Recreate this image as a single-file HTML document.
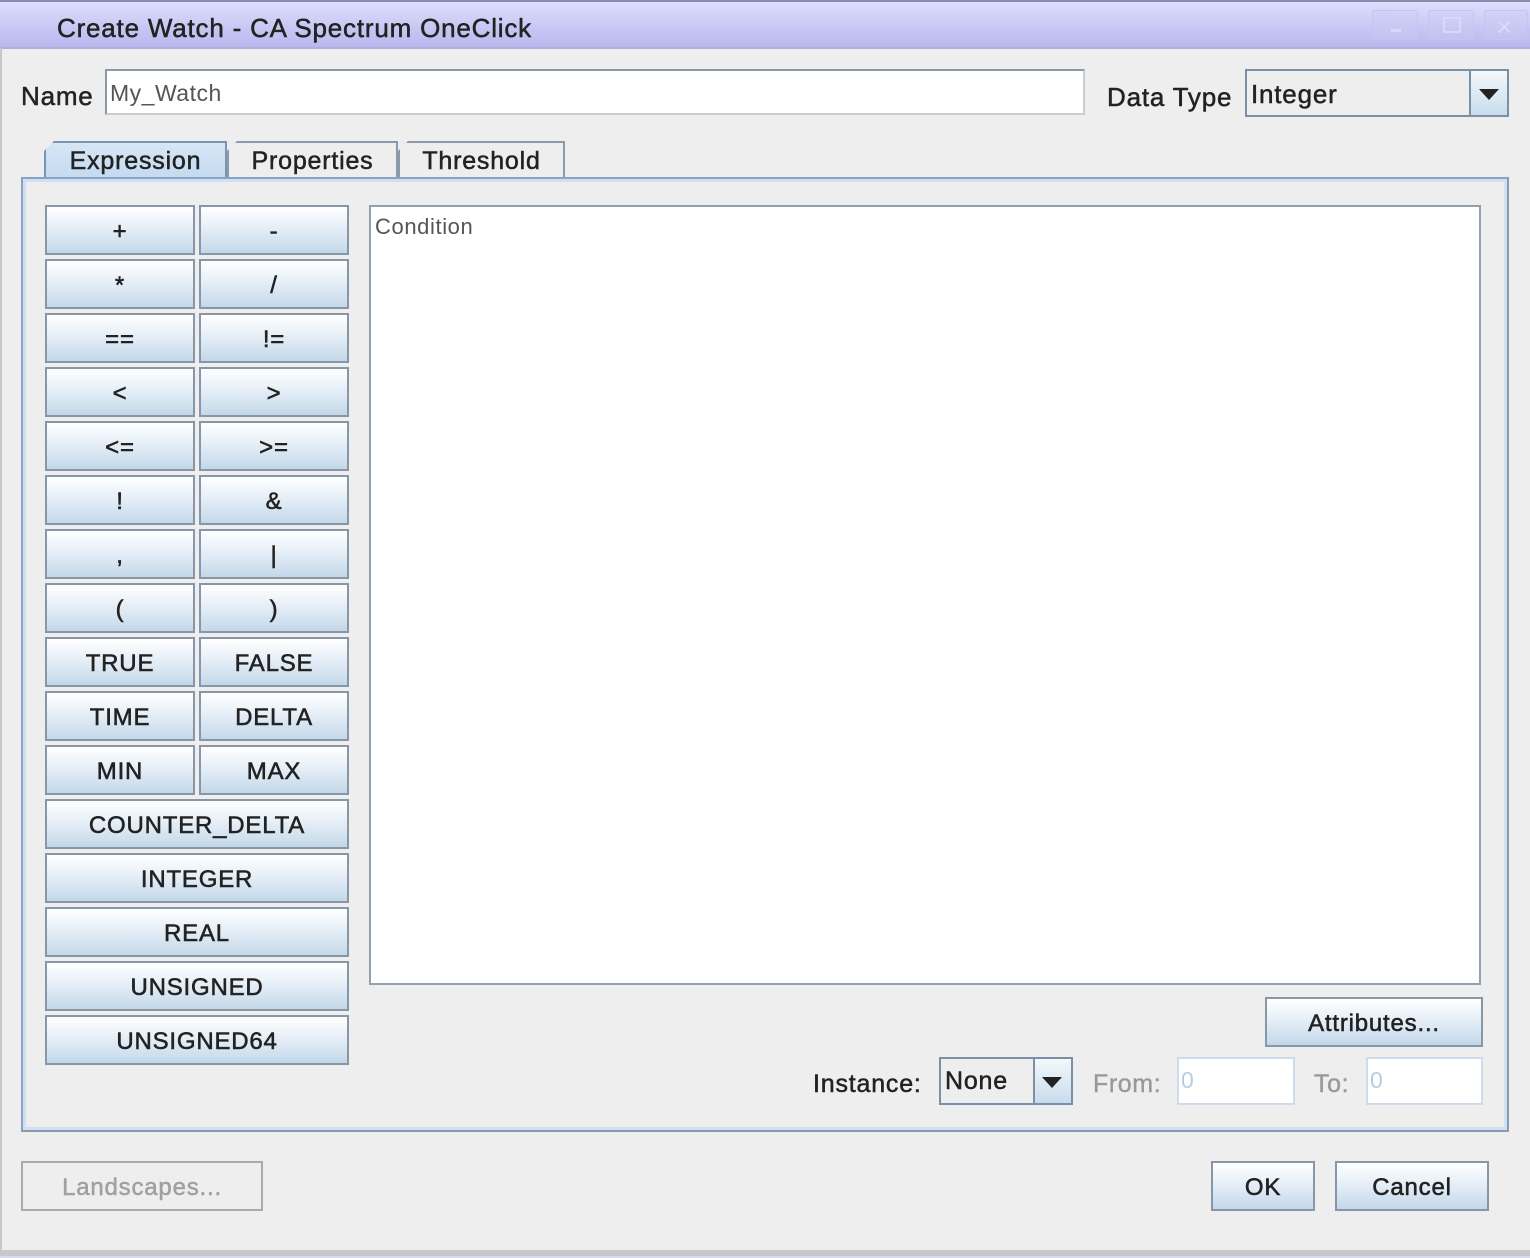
<!DOCTYPE html>
<html><head><meta charset="utf-8"><style>
*{box-sizing:border-box;margin:0;padding:0}
body{width:1530px;height:1258px;background:#eeeeee;font-family:"Liberation Sans",sans-serif;position:relative;overflow:hidden;color:#222}
.a{position:absolute}
.t{font-size:26px;letter-spacing:0.8px;-webkit-text-stroke:0.5px #222;white-space:nowrap}
.title{left:0;top:0;width:1530px;height:49px;background:linear-gradient(#dedefc,#c6c6f4 60%,#b8b8ee);border-top:2px solid #8a8ab0;border-bottom:2px solid #b0b0dc}
.wb{top:10px;width:46px;height:30px;border:1px solid #c4c4f0;border-radius:3px;background:linear-gradient(#d2d2f8,#c2c2f0)}
.btn{position:absolute;border:2px solid #8797a7;background:linear-gradient(#ffffff,#e6eff7 45%,#c4d8ea);display:flex;align-items:center;justify-content:center;padding-top:3px;font-size:24px;letter-spacing:0.8px;-webkit-text-stroke:0.55px #222;color:#222;white-space:nowrap}
.field{position:absolute;background:#fff;border:2px solid #9aa6b2;border-right-color:#c0c8d0;border-bottom-color:#c0c8d0}
.tab{position:absolute;top:141px;height:38px;border:2px solid #8a9aaa;border-bottom:none;background:#eeeeee;font-size:25px;letter-spacing:0.8px;-webkit-text-stroke:0.5px #222;display:flex;align-items:center;justify-content:center;clip-path:polygon(10px 0,100% 0,100% 100%,0 100%,0 10px)}
</style></head><body>
<div class="a title"></div>
<div class="a t" style="left:57px;top:13px">Create Watch - CA Spectrum OneClick</div>
<div class="a wb" style="left:1372px"><div class="a" style="left:18px;top:18px;width:10px;height:3px;background:#d8d8fc"></div></div>
<div class="a wb" style="left:1428px"><div class="a" style="left:14px;top:6px;width:18px;height:16px;border:2px solid #d8d8fc"></div></div>
<div class="a wb" style="left:1484px;width:44px"><div class="a" style="left:10px;top:4px;font-size:22px;color:#d8d8fc">✕</div></div>

<div class="a t" style="left:21px;top:81px">Name</div>
<div class="field" style="left:105px;top:69px;width:980px;height:46px;border-color:#8a98a8 #c6cdd4 #c6cdd4 #8a98a8"></div>
<div class="a" style="left:110px;top:80px;font-size:23px;letter-spacing:0.5px;color:#555">My_Watch</div>
<div class="a t" style="left:1107px;top:82px">Data Type</div>
<div class="a" style="left:1245px;top:69px;width:264px;height:48px;border:2px solid #7a90a6;background:#eeeeee"></div>
<div class="a t" style="left:1251px;top:79px">Integer</div>
<div class="a" style="left:1469px;top:71px;width:38px;height:44px;border-left:2px solid #7a90a6;background:linear-gradient(#f4f8fb,#c8dcec)"></div>
<div class="a" style="left:1479px;top:89px;width:0;height:0;border-left:10px solid transparent;border-right:10px solid transparent;border-top:11px solid #222"></div>

<div class="tab" style="left:44px;width:183px;background:linear-gradient(#d6e6f6,#c4daf0);border-color:#7a94b4">Expression</div>
<div class="tab" style="left:227px;width:171px">Properties</div>
<div class="tab" style="left:398px;width:167px">Threshold</div>

<div class="a" style="left:21px;top:177px;width:1488px;height:955px;border:2px solid #8aa2c8;border-right-color:#8a9aaa;border-bottom-color:#8a9aaa"></div>
<div class="a" style="left:23px;top:179px;width:1484px;height:951px;border:3px solid #cfe0f2"></div>

<div class="field" style="left:369px;top:205px;width:1112px;height:780px;border-color:#94a0ac"></div>
<div class="a" style="left:375px;top:214px;font-size:22px;letter-spacing:0.6px;color:#555">Condition</div>

<div class="btn" style="left:45px;top:205px;width:150px;height:50px">+</div>
<div class="btn" style="left:199px;top:205px;width:150px;height:50px">-</div>
<div class="btn" style="left:45px;top:259px;width:150px;height:50px">*</div>
<div class="btn" style="left:199px;top:259px;width:150px;height:50px">/</div>
<div class="btn" style="left:45px;top:313px;width:150px;height:50px">==</div>
<div class="btn" style="left:199px;top:313px;width:150px;height:50px">!=</div>
<div class="btn" style="left:45px;top:367px;width:150px;height:50px">&lt;</div>
<div class="btn" style="left:199px;top:367px;width:150px;height:50px">&gt;</div>
<div class="btn" style="left:45px;top:421px;width:150px;height:50px">&lt;=</div>
<div class="btn" style="left:199px;top:421px;width:150px;height:50px">&gt;=</div>
<div class="btn" style="left:45px;top:475px;width:150px;height:50px">!</div>
<div class="btn" style="left:199px;top:475px;width:150px;height:50px">&amp;</div>
<div class="btn" style="left:45px;top:529px;width:150px;height:50px">,</div>
<div class="btn" style="left:199px;top:529px;width:150px;height:50px">|</div>
<div class="btn" style="left:45px;top:583px;width:150px;height:50px">(</div>
<div class="btn" style="left:199px;top:583px;width:150px;height:50px">)</div>
<div class="btn" style="left:45px;top:637px;width:150px;height:50px">TRUE</div>
<div class="btn" style="left:199px;top:637px;width:150px;height:50px">FALSE</div>
<div class="btn" style="left:45px;top:691px;width:150px;height:50px">TIME</div>
<div class="btn" style="left:199px;top:691px;width:150px;height:50px">DELTA</div>
<div class="btn" style="left:45px;top:745px;width:150px;height:50px">MIN</div>
<div class="btn" style="left:199px;top:745px;width:150px;height:50px">MAX</div>
<div class="btn" style="left:45px;top:799px;width:304px;height:50px">COUNTER_DELTA</div>
<div class="btn" style="left:45px;top:853px;width:304px;height:50px">INTEGER</div>
<div class="btn" style="left:45px;top:907px;width:304px;height:50px">REAL</div>
<div class="btn" style="left:45px;top:961px;width:304px;height:50px">UNSIGNED</div>
<div class="btn" style="left:45px;top:1015px;width:304px;height:50px">UNSIGNED64</div>

<div class="btn" style="left:1265px;top:997px;width:218px;height:50px">Attributes...</div>

<div class="a t" style="left:813px;top:1070px;font-size:25px">Instance:</div>
<div class="a" style="left:939px;top:1057px;width:134px;height:48px;border:2px solid #7a90a6;background:#eeeeee"></div>
<div class="a t" style="left:945px;top:1067px;font-size:25px">None</div>
<div class="a" style="left:1033px;top:1059px;width:38px;height:44px;border-left:2px solid #7a90a6;background:linear-gradient(#f4f8fb,#c8dcec)"></div>
<div class="a" style="left:1042px;top:1077px;width:0;height:0;border-left:10px solid transparent;border-right:10px solid transparent;border-top:11px solid #222"></div>

<div class="a" style="left:1093px;top:1070px;font-size:25px;letter-spacing:0.6px;color:#999;-webkit-text-stroke:0.4px #999">From:</div>
<div class="a" style="left:1177px;top:1057px;width:118px;height:48px;background:#fff;border:2px solid #cddcec"></div>
<div class="a" style="left:1181px;top:1067px;font-size:23px;color:#b8cce0">0</div>
<div class="a" style="left:1314px;top:1070px;font-size:25px;letter-spacing:0.6px;color:#999;-webkit-text-stroke:0.4px #999">To:</div>
<div class="a" style="left:1366px;top:1057px;width:117px;height:48px;background:#fff;border:2px solid #cddcec"></div>
<div class="a" style="left:1370px;top:1067px;font-size:23px;color:#b8cce0">0</div>

<div class="a" style="left:21px;top:1161px;width:242px;height:50px;border:2px solid #aaaaaa;display:flex;align-items:center;justify-content:center;padding-top:3px;font-size:24px;letter-spacing:0.8px;color:#a0a0a0;-webkit-text-stroke:0.5px #a0a0a0">Landscapes...</div>
<div class="btn" style="left:1211px;top:1161px;width:104px;height:50px">OK</div>
<div class="btn" style="left:1335px;top:1161px;width:154px;height:50px">Cancel</div>

<div class="a" style="left:0;top:48px;width:2px;height:1210px;background:#c8c8c8"></div>
<div class="a" style="left:0;top:1250px;width:1530px;height:8px;background:#c8c8c8;border-bottom:2px solid #d8d8f0"></div>
</body></html>
